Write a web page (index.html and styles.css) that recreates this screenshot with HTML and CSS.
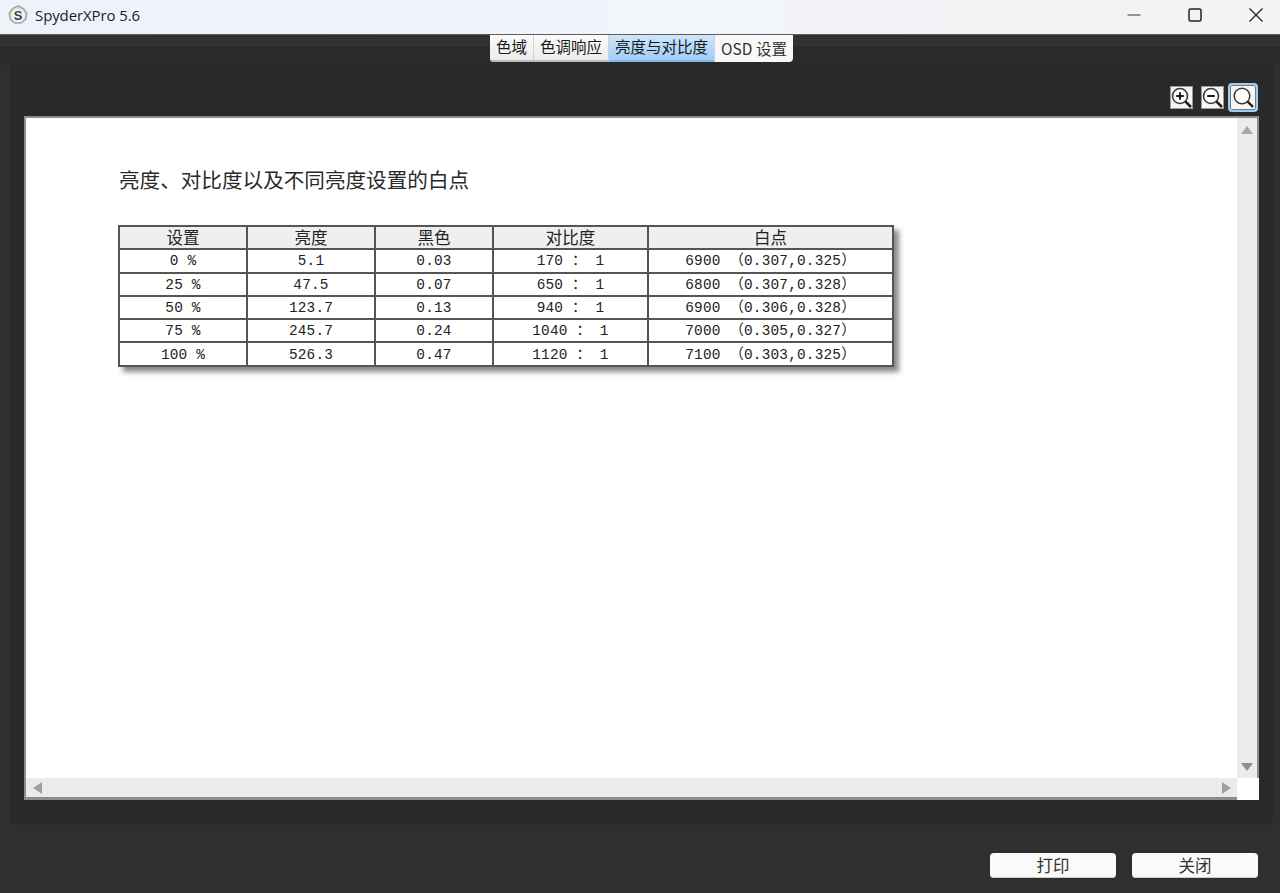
FILE: index.html
```html
<!DOCTYPE html>
<html lang="zh">
<head>
<meta charset="utf-8">
<title>SpyderXPro 5.6</title>
<link rel="stylesheet" href="styles.css">
</head>
<body>
<div class="app">
  <header class="titlebar">
    <div class="title-left">
      <svg class="logo" width="20" height="20" viewBox="0 0 20 20">
        <path d="M10 1 15.5 3.6 18.8 8.5 17.6 14.5 13 18 7 18 2.4 14.5 1.2 8.5 4.5 3.6Z" fill="#dcdcdc" stroke="#a4a4a4" stroke-width="1.5" stroke-linejoin="round"/>
        <circle cx="10" cy="10.5" r="6.6" fill="#f4f4f4"/>
        <text x="10" y="15" text-anchor="middle" class="logo-s">S</text>
      </svg>
      <span class="title-text">SpyderXPro 5.6</span>
    </div>
    <div class="win-controls">
      <svg width="14" height="14" viewBox="0 0 14 14"><path d="M0.5 7H13.5" stroke="#555" stroke-width="1.2"/></svg>
      <svg width="14" height="14" viewBox="0 0 14 14"><rect x="1" y="1" width="12" height="12" rx="1.5" fill="none" stroke="#222" stroke-width="1.5"/></svg>
      <svg width="14" height="14" viewBox="0 0 14 14"><path d="M0.5 0.5 13.5 13.5M13.5 0.5 0.5 13.5" stroke="#222" stroke-width="1.3"/></svg>
    </div>
  </header>

  <main class="main">
    <nav class="tabs">
      <span class="tab tab-1">色域</span>
      <span class="tab tab-2">色调响应</span>
      <span class="tab tab-3 active">亮度与对比度</span>
      <span class="tab tab-4">OSD 设置</span>
    </nav>

    <section class="panel">
      <div class="tools">
        <button class="tool tool-first">
          <svg width="23" height="23" viewBox="0 0 23 23"><circle cx="10" cy="10" r="7.5" fill="#fff" stroke="#3a3a3a" stroke-width="1.6"/><path d="M6.2 10H13.8M10 6.2V13.8" stroke="#1c1c1c" stroke-width="2"/><path d="M15.3 15.3 21 21" stroke="#1c1c1c" stroke-width="2.6"/></svg>
        </button>
        <button class="tool">
          <svg width="23" height="23" viewBox="0 0 23 23"><circle cx="10" cy="10" r="7.5" fill="#fff" stroke="#3a3a3a" stroke-width="1.6"/><path d="M6.2 10H13.8" stroke="#1c1c1c" stroke-width="2"/><path d="M15.3 15.3 21 21" stroke="#1c1c1c" stroke-width="2.6"/></svg>
        </button>
        <button class="tool tool-on">
          <svg width="23" height="23" viewBox="0 0 23 23"><circle cx="10" cy="10" r="7.8" fill="#fff" stroke="#3a3a3a" stroke-width="1.5"/><path d="M15.5 15.5 21 21" stroke="#1c1c1c" stroke-width="2.4"/></svg>
        </button>
      </div>

      <div class="viewer">
        <div class="page">
          <h1 class="report-title">亮度、对比度以及不同亮度设置的白点</h1>
          <table class="report">
            <colgroup>
              <col class="c1"><col class="c2"><col class="c3"><col class="c4"><col class="c5">
            </colgroup>
            <thead>
              <tr><th>设置</th><th>亮度</th><th>黑色</th><th>对比度</th><th>白点</th></tr>
            </thead>
            <tbody>
              <tr><td>0 %</td><td>5.1</td><td>0.03</td><td>170 ： 1</td><td>6900 （0.307,0.325）</td></tr>
              <tr><td>25 %</td><td>47.5</td><td>0.07</td><td>650 ： 1</td><td>6800 （0.307,0.328）</td></tr>
              <tr><td>50 %</td><td>123.7</td><td>0.13</td><td>940 ： 1</td><td>6900 （0.306,0.328）</td></tr>
              <tr><td>75 %</td><td>245.7</td><td>0.24</td><td>1040 ： 1</td><td>7000 （0.305,0.327）</td></tr>
              <tr><td>100 %</td><td>526.3</td><td>0.47</td><td>1120 ： 1</td><td>7100 （0.303,0.325）</td></tr>
            </tbody>
          </table>
        </div>
        <div class="vbar">
          <span class="arrow arrow-up"></span>
          <span class="arrow arrow-down"></span>
        </div>
        <div class="vedge"></div>
        <div class="hbar">
          <span class="arrow arrow-left"></span>
          <span class="arrow arrow-right"></span>
        </div>
        <div class="corner"></div>
      </div>
    </section>

    <footer class="actions">
      <button class="btn">打印</button>
      <button class="btn">关闭</button>
    </footer>
  </main>
</div>
</body>
</html>
```

FILE: styles.css
```css
* { box-sizing: border-box; }
html, body { margin: 0; height: 100%; }
body {
  font-family: "Noto Sans CJK SC", "Noto Sans", sans-serif;
  background: #2f2f2f;
  overflow: hidden;
}
.app { height: 893px; display: flex; flex-direction: column; }

.titlebar {
  height: 35px;
  flex: none;
  display: flex;
  justify-content: space-between;
  align-items: center;
  padding-bottom: 5px;
  background: linear-gradient(90deg, #eef3fb 0%, #f1f5fb 45%, #f3f3f4 85%, #f3f3f3 100%);
  border-bottom: 1px solid #5c5f62;
}
.title-left { display: flex; align-items: center; padding-left: 8px; gap: 7px; }
.logo { display: block; }
.logo-s { font: bold 13px "Liberation Sans", sans-serif; fill: #3c3c3c; }
.title-text { font: 15px/20px "Open Sans", "Noto Sans", sans-serif; color: #1c1c1c; letter-spacing: -0.1px; }
.win-controls { display: flex; align-items: center; gap: 47px; padding-right: 17px; }
.win-controls svg { display: block; }

.main {
  flex: 1;
  display: flex;
  flex-direction: column;
  background: linear-gradient(#323232 0, #323232 12px, #2a2a2a 12px, #2a2a2a 30px, #2f2f2f 30px);
}

.tabs {
  height: 30px;
  flex: none;
  display: flex;
  justify-content: center;
  align-items: flex-start;
  padding-left: 3px;
}
.tab {
  height: 27px;
  padding-bottom: 3px;
  display: flex;
  align-items: center;
  justify-content: center;
  font-size: 15.5px;
  color: #1a1a1a;
  background: linear-gradient(#fbfbfb, #ececec);
  border-right: 1px solid #d2d2d2;
  border-bottom: 2px solid #bbb;
}
.tab-1 { width: 44px; border-radius: 0 0 0 3px; }
.tab-2 { width: 75px; }
.tab-3 { width: 106px; }
.tab-4 { width: 78px; padding-bottom: 1px; border-right: 0; border-bottom: 0; border-radius: 0 0 4px 0; background: #f8f8f8; color: #333; }
.tab.active {
  background: linear-gradient(#cfe6fb, #9fcdf8);
  border-bottom-color: #8ab8e6;
}

.panel {
  height: 758px;
  flex: none;
  margin: 0 7px 0 10px;
  padding: 18px 14px 23px 14px;
  background: #292929;
  border-radius: 0 0 7px 7px;
  display: flex;
  flex-direction: column;
  box-shadow: 0 1px 1px #272727;
}

.tools {
  height: 33px;
  flex: none;
  display: flex;
  justify-content: flex-end;
  align-items: flex-start;
  padding-right: 1px;
}
.tool {
  width: 23px;
  height: 23px;
  margin: 3px 9px 0 0;
  padding: 0;
  display: flex;
  align-items: center;
  justify-content: center;
  background: #f6f6f6;
  border: 0;
  box-shadow: inset 0 0 0 1px #999;
}
.tool svg { display: block; flex: none; }
.tool-first { margin-right: 8px; }
.tool-on {
  width: 30px;
  height: 29px;
  margin: 0 0 0 -5px;
  background: #f6f6f6;
  border: 2px solid #9ccdf6;
  border-radius: 4px;
  box-shadow: inset 0 0 0 1px #777;
}

.viewer {
  width: 1235px;
  height: 684px;
  flex: none;
  display: grid;
  grid-template-columns: 1fr 20px 2px;
  grid-template-rows: 1fr 22px;
  background: #fff;
  border-top: 2px solid #8c8c8c;
  border-left: 2px solid #8c8c8c;
}
.page { grid-column: 1; grid-row: 1; padding: 44px 0 0 92px; overflow: hidden; }
.report-title {
  margin: 0 0 29px 1px;
  font-size: 20.6px;
  line-height: 34px;
  font-weight: 400;
  color: #2a2a2a;
}
.report {
  border-collapse: collapse;
  table-layout: fixed;
  width: 774px;
  font-family: "Liberation Mono", "Noto Sans CJK SC", monospace;
  font-size: 14.4px;
  letter-spacing: 0.2px;
  color: #222;
  box-shadow: 5px 5px 5px rgba(60, 60, 60, 0.6);
}
.c1, .c2 { width: 128px; }
.c3 { width: 118px; }
.c4 { width: 155px; }
.c5 { width: 245px; }
.report th, .report td {
  height: 23.3px;
  padding: 2px 0 0;
  border: 2px solid #555;
  text-align: center;
  line-height: 19px;
}
.report th {
  padding: 0;
  font-family: "Noto Sans CJK SC", sans-serif;
  font-weight: 400;
  font-size: 16.5px;
  letter-spacing: 0;
  background: #efefef;
}

.vbar {
  grid-column: 2;
  grid-row: 1;
  background: #ebebeb;
  position: relative;
}
.vedge { grid-column: 3; grid-row: 1; background: #8c8c8c; }
.hbar {
  grid-column: 1;
  grid-row: 2;
  background: #ebebeb;
  position: relative;
  border-bottom: 3px solid #8c8c8c;
}
.corner { grid-column: 2 / 4; grid-row: 2; background: #fff; }
.arrow { position: absolute; width: 0; height: 0; border-style: solid; border-color: transparent; }
.arrow-up { left: 4px; top: 8px; border-width: 0 6px 8px; border-bottom-color: #a6a6a6; }
.arrow-down { left: 4px; bottom: 7px; border-width: 8px 6px 0; border-top-color: #8e8e8e; }
.arrow-left { left: 7px; top: 4px; border-width: 6px 9px 6px 0; border-right-color: #a0a0a0; }
.arrow-right { right: 6px; top: 4px; border-width: 6px 0 6px 9px; border-left-color: #a0a0a0; }

.actions {
  flex: 1;
  display: flex;
  justify-content: flex-end;
  align-items: flex-start;
  gap: 16px;
  padding: 30px 22px 0 0;
}
.btn {
  width: 126px;
  height: 25px;
  padding: 0 0 2px;
  border: 0;
  border-radius: 4px;
  background: #fafafa;
  box-shadow: inset 0 -1px 0 #ccc;
  font: 16.5px/22px "Noto Sans CJK SC", sans-serif;
  color: #333;
}
```
